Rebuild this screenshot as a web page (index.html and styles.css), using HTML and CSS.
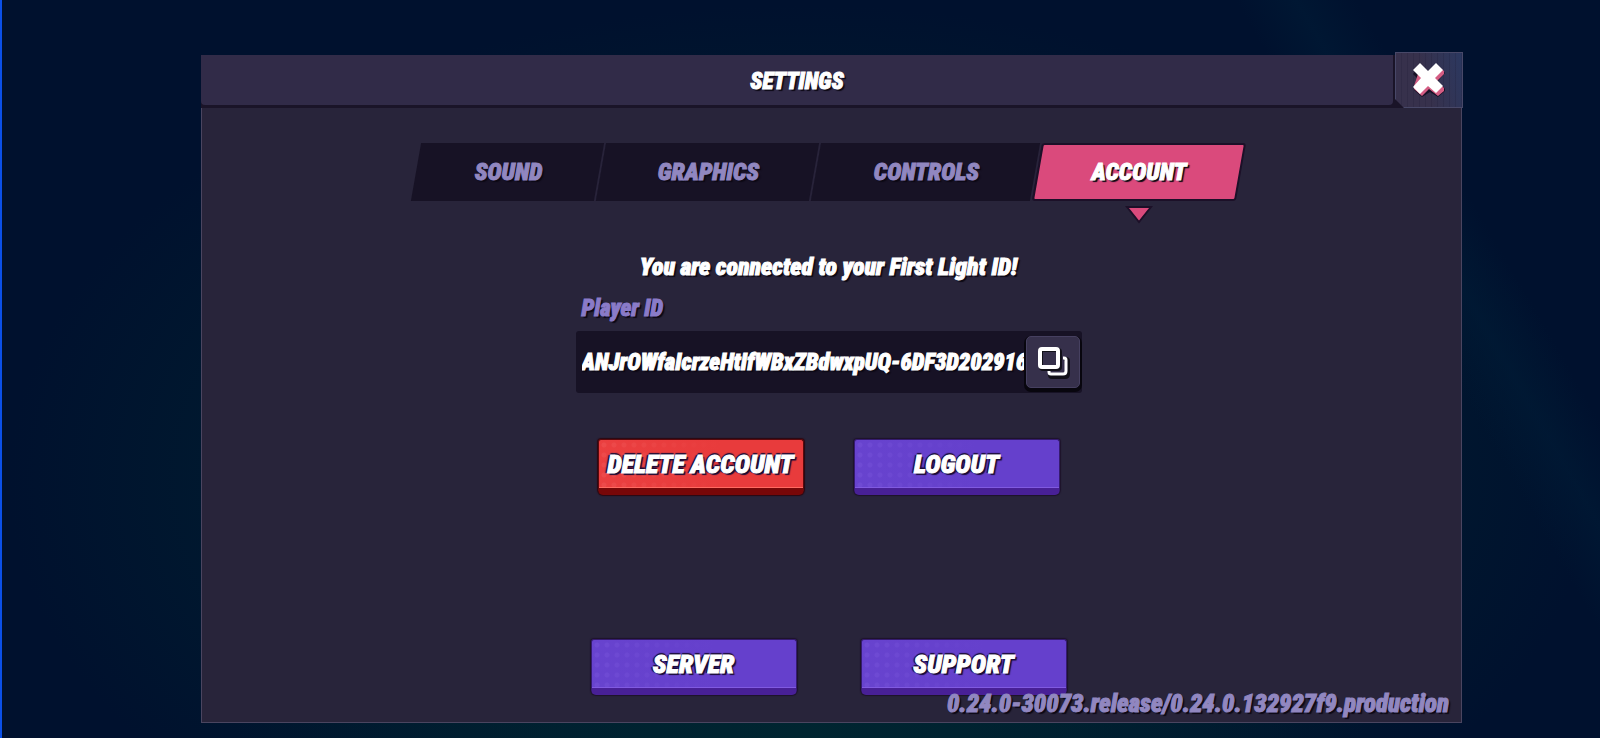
FILE: index.html
```html
<!DOCTYPE html>
<html lang="en">
<head>
    <meta charset="utf-8">
    <title>Settings</title>
    <link rel="stylesheet" href="styles.css">
</head>
<body>
    <main class="panel">
        <header class="titlebar">
            <h1 class="title">SETTINGS</h1>
            <button class="close" aria-label="Close">
                <svg width="36" height="38" viewBox="0 0 36 38">
                    <path d="M9 4L18 11L26 4L34 12L27 20L34 28V30L27 36L19 31L11 36L3 29V27L9 20L2 13Z" fill="#171126"/>
                    <path d="M10 4L18 12L26 4L33 10V13L26 20L33 27V30L27 35L18 28L11 35L3 28V25Z" fill="#d45c83"/>
                    <path d="M9 2L17 10L25 2L32 9L24 17L32 25L25 32L17 25L9 33L2 26L10 17L2 9Z" fill="#fff"/>
                </svg>
            </button>
        </header>

        <div class="content">
            <nav class="tabs">
                <button class="tab tab-sound">SOUND</button>
                <button class="tab tab-graphics">GRAPHICS</button>
                <button class="tab tab-controls">CONTROLS</button>
                <button class="tab tab-account active">ACCOUNT
                    <svg class="arrow" width="28" height="20" viewBox="0 0 28 20">
                        <path d="M2 2H26L14 17Z" fill="#da4a7c" stroke="#1c1028" stroke-width="2"/>
                    </svg>
                </button>
            </nav>

            <p class="message">You are connected to your First Light ID!</p>

            <div class="field">
                <label class="label" for="playerId">Player ID</label>
                <div class="id-box">
                    <input id="playerId" class="id-input" type="text" readonly value="ANJrOWfaIcrzeHtIfWBxZBdwxpUQ-6DF3D20291605E8">
                    <button class="copy" aria-label="Copy player ID">
                        <svg width="34" height="34" viewBox="0 0 34 34" fill="none">
                            <path d="M14 28V30Q14 32 16 32H29Q32 32 32 29V16Q32 14 30 14H28" stroke="#111018" stroke-width="4"/>
                            <rect x="5" y="5" width="19" height="19" rx="2" stroke="#111018" stroke-width="4"/>
                            <path d="M13 26V27Q13 29 15 29H27Q30 29 30 26V15Q30 13 28 13H27" stroke="#fff" stroke-width="3"/>
                            <rect x="4" y="4" width="18" height="18" rx="2" stroke="#fff" stroke-width="4"/>
                        </svg>
                    </button>
                </div>
            </div>

            <div class="actions">
                <button class="btn btn-danger">DELETE ACCOUNT</button>
                <button class="btn">LOGOUT</button>
            </div>

            <div class="actions actions-bottom">
                <button class="btn">SERVER</button>
                <button class="btn">SUPPORT</button>
            </div>
        </div>

        <div class="version">0.24.0-30073.release/0.24.0.132927f9.production</div>
    </main>
</body>
</html>
```
FILE: styles.css
```css
* {
    box-sizing: border-box;
}

body {
    margin: 0;
    min-height: 100vh;
    display: flex;
    padding: 52px 137px 15px 199px;
    border-left: 2px solid #0b50e8;
    background:
        linear-gradient(60deg, transparent 82%, rgba(0, 34, 60, 0.35) 85%, transparent 88%),
        radial-gradient(ellipse at 50% 100%, rgba(0, 45, 50, 0.5), transparent 50%),
        radial-gradient(ellipse at 50% 65%, rgba(0, 34, 48, 0.7) 40%, transparent 70%),
        #00112e;
    font-family: "Roboto Condensed", "Liberation Sans Narrow", "Open Sans", sans-serif;
    font-weight: 900;
    font-style: italic;
    font-size: 24px;
    line-height: 28px;
    color: #fff;
    text-shadow: 2px 2px 1px #0c0814;
    -webkit-text-stroke: 1px currentColor;
}

button,
input {
    font: inherit;
    color: inherit;
    text-shadow: inherit;
    border: none;
    padding: 0;
}

button {
    cursor: pointer;
}

.panel {
    position: relative;
    flex: 1;
    display: flex;
    flex-direction: column;
}

.titlebar {
    display: flex;
    align-items: flex-start;
    gap: 2px;
    height: 56px;
    background: linear-gradient(#1a1428, #1a1428) 0 3px no-repeat;
}

.title {
    flex: 1;
    margin: 3px 0 0;
    height: 50px;
    line-height: 54px;
    border-radius: 0 0 4px 4px;
    background: #312b48;
    text-align: center;
    font-size: 23px;
    font-weight: 900;
}

.close {
    display: flex;
    align-items: center;
    justify-content: center;
    width: 68px;
    height: 56px;
    background:
        repeating-linear-gradient(90deg, transparent 0 5px, rgba(24, 22, 48, 0.2) 5px 6px),
        linear-gradient(75deg, #37314c 45%, #2b3860);
    border: 1px solid #484868;
    clip-path: polygon(0 0, 100% 0, 100% 100%, 9px 100%, 0 47px);
}

.content {
    flex: 1;
    display: flex;
    flex-direction: column;
    align-items: center;
    margin-right: 1px;
    padding: 35px 6px 27px 0;
    background: #28243a;
    border: 1px solid #4a4560;
    border-top: none;
}

.tabs {
    display: flex;
}

.tab {
    position: relative;
    z-index: 0;
    height: 58px;
    background: none;
    color: #9187c0;
}

.tab::before {
    content: "";
    position: absolute;
    z-index: -1;
    inset: 0;
    transform: skewX(-10deg);
    background: #171225;
    border-right: 2px solid #28233a;
}

.tab-sound {
    width: 185px;
}

.tab-graphics {
    width: 215px;
}

.tab-controls {
    width: 221px;
}

.tab-account {
    width: 204px;
}

.tab.active {
    color: #fff;
}

.tab.active::before {
    background: #da4a7c;
    border: 2px solid #1c1028;
    border-radius: 3px;
}

.arrow {
    position: absolute;
    top: 62px;
    left: 50%;
    margin-left: -14px;
}

.message {
    margin: 52px 0 0;
}

.field {
    width: 506px;
    margin-top: 14px;
}

.label {
    display: block;
    padding-left: 6px;
    font-size: 23px;
    color: #8a7bc8;
}

.id-box {
    display: flex;
    align-items: center;
    height: 62px;
    margin-top: 8px;
    padding: 0 2px 0 6px;
    background: #171225;
    border-radius: 3px;
}

.id-input {
    flex: 1;
    min-width: 0;
    height: 40px;
    background: none;
    outline: none;
    font-size: 23px;
}

.copy {
    display: flex;
    align-items: center;
    justify-content: center;
    width: 54px;
    height: 52px;
    background: #36304b;
    border: 1px solid #464060;
    border-radius: 5px;
    box-shadow: 0 2px 0 2px #08060e;
}

.actions {
    display: flex;
    gap: 50px;
    margin-top: 46px;
}

.actions-bottom {
    gap: 64px;
    margin-top: auto;
}

.btn {
    width: 206px;
    height: 56px;
    background:
        linear-gradient(90deg, rgba(101, 64, 204, 0.6), #6540cc 60%),
        radial-gradient(circle, #7f5ce0 2px, transparent 3px) 0 0 / 10px 10px,
        #6b48d2;
    border: 1px solid #351b70;
    border-bottom: 7px solid #482096;
    border-radius: 3px 3px 5px 5px;
    box-shadow: inset 0 -1px 0 #805ae0, 0 0 1px 1px #1d132b;
    font-size: 26px;
    text-shadow: 2px 2px 1px #180b35, -2px 0 1px #180b35, 0 -2px 1px #180b35;
}

.btn-danger {
    background:
        linear-gradient(90deg, rgba(232, 59, 60, 0.6), #e83b3c 60%),
        radial-gradient(circle, #f56262 2px, transparent 3px) 0 0 / 10px 10px,
        #ee4646;
    border-color: #5b090c;
    border-bottom-color: #780708;
    box-shadow: inset 0 -1px 0 #ff6b62, 0 0 1px 1px #2b0812;
}

.version {
    position: absolute;
    right: 14px;
    bottom: 5px;
    font-size: 25px;
    color: #9187c0;
}
```
